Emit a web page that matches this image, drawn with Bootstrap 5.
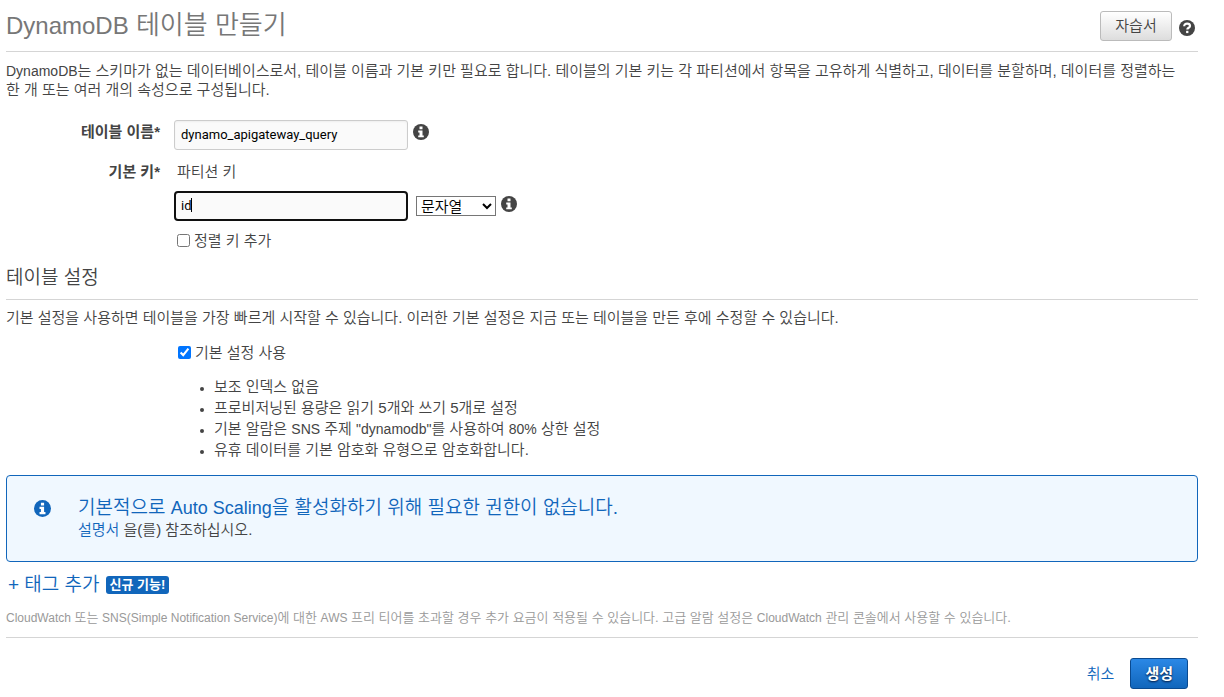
<!DOCTYPE html>
<html lang="ko">
<head>
<meta charset="utf-8">
<meta name="viewport" content="width=device-width, initial-scale=1">
<title>DynamoDB 테이블 만들기</title>
<link href="https://cdn.jsdelivr.net/npm/bootstrap@5.3.0/dist/css/bootstrap.min.css" rel="stylesheet">
<style>
  body { font-family: "Liberation Sans", "Noto Sans CJK KR", sans-serif; font-size: 15px; font-weight: 350; line-height: 19px; color: #444; background: #fff; }
  a { color: #1166bb; text-decoration: none; }
  .page { padding: 0 26px 8px 6px; }
  .en { font-size: 14px; line-height: 1; }
  .rule { border-bottom: 1px solid #d5d5d5; }
  .page-head { height: 52px; padding-top: 11px; }
  .head-tools { gap: 7px; padding-right: 3px; }
  h1 { font-size: 26px; line-height: 28px; color: #777; font-weight: 350; }
  h1 .en { font-size: 24px; }
  .btn { font-size: 15px; line-height: 20px; border-radius: 3px; padding: 4px 14px; }
  .btn-guide { width: 72px; color: #444; font-weight: 350; border-color: #bbb; background: linear-gradient(#fff, #ddd); }
  .btn-make { color: #fff; font-weight: 700; border-color: #0a4a90; background: linear-gradient(#2b88e6, #1166bb); text-shadow: 0 1px 2px #013; padding: 5px 14px; line-height: 19px; }
  .intro { padding: 9px 12px 0 0; }
  .form-line { gap: 14px; }
  .first-line { margin: 21px 0 12px; }
  .label-col { width: 154px; flex: none; text-align: right; }
  .label-name { font-weight: 700; }
  .first-line .label-name { padding-top: 2px; }
  .text-field { width: 234px; height: 30px; padding: 0 6px 2px; border: 1px solid #ccc; border-radius: 3px; background: #fafafa; color: #000; font: 13px Roboto, sans-serif; box-shadow: inset 0 1px 2px #eee; }
  .text-field.active { border: 2px solid #101010; border-radius: 4px; padding: 0 5px 2px; outline: 0; box-shadow: none; }
  .caret { left: 17px; top: 7px; width: 1px; height: 14px; background: #000; }
  .key-caption { padding: 0 0 10px 3px; }
  .sort-line { padding: 10px 0 0 3px; }
  .type-pick { width: 80px; height: 20px; padding: 0; border: 1px solid #767676; background: #fff; color: #000; font: 350 15px "Liberation Sans", "Noto Sans CJK KR", sans-serif; }
  .tick { width: 13px; height: 13px; margin: 0; flex: none; accent-color: #0075ff; }
  h2 { font-size: 19px; line-height: 24px; font-weight: 350; color: #444; padding: 16px 0 9px; }
  .facts { margin: 0; padding-left: 208px; line-height: 21px; }
  .facts li::marker { font-size: 12px; }
  .default-line { margin: 16px 0 14px; }
  .notice { border: 1px solid #1166bb; border-radius: 4px; background: #f0f8ff; margin-top: 15px; padding: 20px 27px 22px; gap: 27px; }
  .notice-title { font-size: 19px; line-height: 24px; color: #1166bb; }
  .notice-title .en { font-size: 18px; }
  .tag-line { margin-top: 11px; padding-left: 2px; gap: 6px; }
  .tag-link { font-size: 19px; line-height: 24px; }
  .new-badge { font-size: 13px; line-height: 18px; padding: 0 4px; border-radius: 3px; background: #1166bb; }
  .fine { font-size: 13px; line-height: 18px; color: #999; padding: 12px 0 10px; }
  .fine .en { font-size: 12px; }
  .actions { gap: 16px; padding: 20px 10px 0 0; }
</style>
</head>
<body>
<svg class="d-none" xmlns="http://www.w3.org/2000/svg">
  <symbol id="info" viewBox="0 0 16 16"><circle cx="8" cy="8" r="8" fill="currentColor"/><path d="M6.5 2.5h3v2.7h-3zM5.2 6.4h4.3v5h1.3v1.9H5.2v-1.9h1.3v-3H5.2z" fill="#fff"/></symbol>
  <symbol id="help" viewBox="0 0 16 16"><circle cx="8" cy="8" r="8" fill="currentColor"/><path d="M5.2 6.3c0-1.9 1.2-2.7 2.9-2.7s2.9.8 2.9 2.3c0 1.9-2.7 1.8-2.7 3.6" fill="none" stroke="#fff" stroke-width="2.2"/><path d="M7.1 10.8h2.3v2.3H7.1z" fill="#fff"/></symbol>
</svg>
<main class="page container-fluid">
  <header class="page-head rule d-flex justify-content-between align-items-start">
    <h1 class="m-0"><span class="en">DynamoDB</span> 테이블 만들기</h1>
    <div class="head-tools d-flex align-items-center">
      <button type="button" class="btn btn-guide">자습서</button>
      <svg class="mt-1" width="16" height="16" role="img" aria-label="도움말"><use href="#help"/></svg>
    </div>
  </header>

  <p class="intro m-0"><span class="en">DynamoDB</span>는 스키마가 없는 데이터베이스로서, 테이블 이름과 기본 키만 필요로 합니다. 테이블의 기본 키는 각 파티션에서 항목을 고유하게 식별하고, 데이터를 분할하며, 데이터를 정렬하는 한 개 또는 여러 개의 속성으로 구성됩니다.</p>

  <form>
    <div class="form-line first-line d-flex">
      <label class="label-col label-name" for="tname">테이블 이름*</label>
      <div class="d-flex">
        <input class="text-field" id="tname" type="text" value="dynamo_apigateway_query">
        <svg class="mt-1 ms-1" width="18" height="16" role="img" aria-label="정보"><use href="#info"/></svg>
      </div>
    </div>
    <div class="form-line d-flex">
      <label class="label-col label-name" for="pkey">기본 키*</label>
      <div>
        <div class="key-caption">파티션 키</div>
        <div class="d-flex align-items-center">
          <div class="position-relative">
            <input class="text-field active d-block" id="pkey" type="text" value="id">
            <span class="caret position-absolute"></span>
          </div>
          <select class="type-pick ms-2" aria-label="키 유형"><option>문자열</option><option>숫자</option></select>
          <svg class="ms-1 mb-1" width="18" height="16" role="img" aria-label="정보"><use href="#info"/></svg>
        </div>
        <div class="sort-line d-flex align-items-center gap-1">
          <input class="tick" type="checkbox" id="sort"><label for="sort">정렬 키 추가</label>
        </div>
      </div>
    </div>

    <h2 class="rule m-0">테이블 설정</h2>
    <p class="m-0 pt-2">기본 설정을 사용하면 테이블을 가장 빠르게 시작할 수 있습니다. 이러한 기본 설정은 지금 또는 테이블을 만든 후에 수정할 수 있습니다.</p>
    <div class="form-line default-line d-flex">
      <div class="label-col"></div>
      <div class="d-flex align-items-center gap-1 ps-1">
        <input class="tick" type="checkbox" id="defaults" checked><label for="defaults">기본 설정 사용</label>
      </div>
    </div>
    <ul class="facts">
      <li>보조 인덱스 없음</li>
      <li>프로비저닝된 용량은 읽기 5개와 쓰기 5개로 설정</li>
      <li>기본 알람은 <span class="en">SNS</span> 주제 <span class="en">"dynamodb"</span>를 사용하여 <span class="en">80%</span> 상한 설정</li>
      <li>유휴 데이터를 기본 암호화 유형으로 암호화합니다.</li>
    </ul>

    <div class="notice d-flex">
      <svg class="mt-1" width="17" height="17" role="img" aria-label="정보" color="#1166bb"><use href="#info"/></svg>
      <div>
        <div class="notice-title">기본적으로 <span class="en">Auto Scaling</span>을 활성화하기 위해 필요한 권한이 없습니다.</div>
        <div><a href="#">설명서</a> 을(를) 참조하십시오.</div>
      </div>
    </div>

    <div class="tag-line d-flex align-items-center">
      <a class="tag-link" href="#">+ 태그 추가</a><span class="badge new-badge">신규 기능!</span>
    </div>
    <p class="fine rule m-0"><span class="en">CloudWatch</span> 또는 <span class="en">SNS(Simple Notification Service)</span>에 대한 <span class="en">AWS</span> 프리 티어를 초과할 경우 추가 요금이 적용될 수 있습니다. 고급 알람 설정은 <span class="en">CloudWatch</span> 관리 콘솔에서 사용할 수 있습니다.</p>
    <div class="actions d-flex justify-content-end align-items-center">
      <a href="#">취소</a>
      <button type="button" class="btn btn-make">생성</button>
    </div>
  </form>
</main>
<script src="https://cdn.jsdelivr.net/npm/bootstrap@5.3.0/dist/js/bootstrap.bundle.min.js"></script>
</body>
</html>
